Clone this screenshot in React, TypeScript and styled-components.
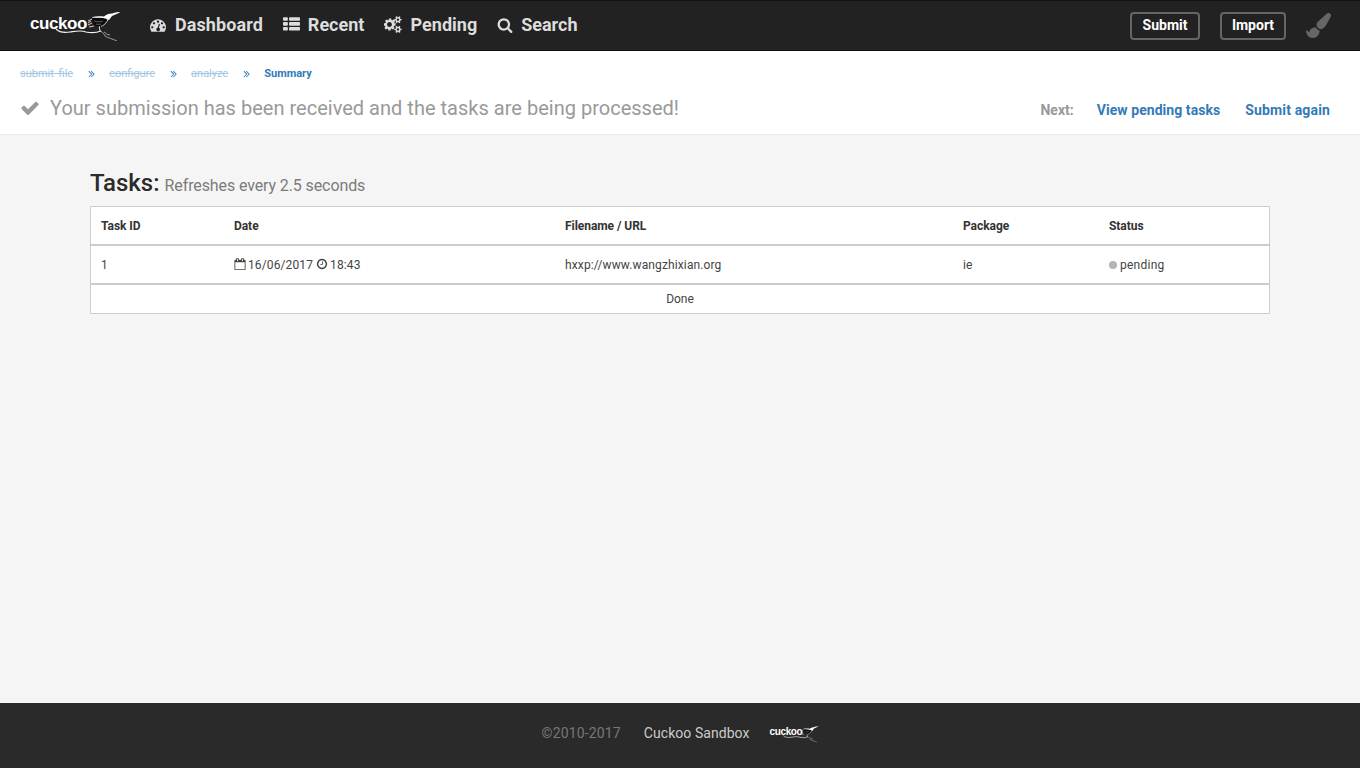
import React from "react";
import styled, { createGlobalStyle } from "styled-components";

const Global = createGlobalStyle`
  html, body { margin: 0; padding: 0; height: 100%; }
  body { font-family: Roboto, "Liberation Sans", sans-serif; background: #f5f5f5; color: #222; }
  #root { height: 100%; }
  * { box-sizing: border-box; }
`;

const Page = styled.div`
  height: 768px;
  display: flex;
  flex-direction: column;
  overflow: hidden;
`;

const TopBar = styled.header`
  height: 51px;
  flex: none;
  background: #222;
  border-top: 1px solid #111;
  border-bottom: 1px solid #111;
  display: flex;
  align-items: center;
  padding: 0 29px 0 30px;
`;

const LogoBox = styled.div<{ $small?: boolean }>`
  display: flex;
  align-items: flex-start;
  flex: none;
  width: ${(p) => (p.$small ? 50 : 91)}px;
  height: ${(p) => (p.$small ? 18 : 30)}px;
  margin-top: ${(p) => (p.$small ? 1 : 0)}px;
  position: relative;
`;

const LogoText = styled.span<{ $small?: boolean }>`
  font-family: "Liberation Sans", Arial, sans-serif;
  font-weight: 700;
  font-size: ${(p) => (p.$small ? 10 : 17)}px;
  letter-spacing: ${(p) => (p.$small ? -0.35 : -0.45)}px;
  line-height: 1;
  color: #fff;
  margin-top: ${(p) => (p.$small ? 2 : 4)}px;
`;

const LogoArt = styled.svg`
  position: absolute;
  left: 0;
  top: 0;
  width: 100%;
  height: 100%;
`;

const Nav = styled.nav`
  display: flex;
  align-items: center;
  margin: 0 0 2px 29px;
  gap: 20px;
`;

const NavItem = styled.a<{ $gap?: number; $ls?: number }>`
  display: flex;
  align-items: center;
  gap: ${(p) => p.$gap ?? 8}px;
  font-size: 18px;
  font-weight: 700;
  letter-spacing: ${(p) => p.$ls ?? 0}px;
  color: #ddd;
  svg { fill: #ddd; display: block; }
`;

const RightTools = styled.div`
  margin-left: auto;
  display: flex;
  align-items: center;
  svg { display: block; fill: #666; }
`;

const OutlineButton = styled.a<{ $w: number }>`
  width: ${(p) => p.$w}px;
  height: 28px;
  margin-right: 20px;
  padding-bottom: 2px;
  border: 2px solid #666;
  border-radius: 4px;
  display: flex;
  align-items: center;
  justify-content: center;
  font-size: 14px;
  font-weight: 700;
  color: #fff;
`;

const Sub = styled.section`
  height: 84px;
  flex: none;
  background: #fff;
  border-bottom: 1px solid #eaeaea;
  padding: 16px 30px 0 20px;
`;

const Crumbs = styled.div`
  display: flex;
  align-items: center;
  height: 13px;
  font-size: 11px;
  line-height: 13px;
`;

const Crumb = styled.a<{ $current?: boolean }>`
  color: ${(p) => (p.$current ? "#337ab7" : "#a3c6e4")};
  font-weight: ${(p) => (p.$current ? 700 : 400)};
  text-decoration: ${(p) => (p.$current ? "none" : "line-through")};
  word-spacing: 2px;
`;

const CrumbSep = styled.svg`
  width: 7px;
  height: 8px;
  margin: 0 14px 0 15px;
  fill: #337ab7;
`;

const SubRow = styled.div`
  display: flex;
  align-items: center;
  margin-top: 13px;
  height: 30px;
`;

const Message = styled.h2`
  margin: 0;
  display: flex;
  align-items: center;
  font-size: 20px;
  font-weight: 400;
  letter-spacing: 0.015px;
  color: #999;
  gap: 10px;
  svg { fill: #999; display: block; }
`;

const NextBox = styled.div`
  margin-left: auto;
  display: flex;
  align-items: center;
  font-size: 14px;
  font-weight: 700;
  padding-top: 3px;
`;

const NextLabel = styled.span`
  color: #999;
  margin-right: 23px;
`;

const NextLink = styled.a<{ $ml?: number; $ls?: number }>`
  color: #337ab7;
  margin-left: ${(p) => p.$ml ?? 0}px;
  letter-spacing: ${(p) => p.$ls ?? 0}px;
`;

const Main = styled.main`
  flex: 1;
  padding: 32px 90px 0;
`;

const Heading = styled.h3`
  margin: 0;
  height: 39px;
  display: flex;
  align-items: baseline;
  font-size: 24px;
  font-weight: 500;
  line-height: 32px;
  color: #2b2b2b;
  gap: 5px;
`;

const HeadingNote = styled.small`
  font-size: 16px;
  font-weight: 400;
  letter-spacing: -0.11px;
  color: #7b7b7b;
`;

const Table = styled.table`
  width: 1180px;
  border-collapse: separate;
  border-spacing: 0;
  table-layout: fixed;
  background: #fff;
  border: 1px solid #ccc;
  font-size: 12px;
  color: #444;
`;

const Th = styled.th`
  height: 39px;
  padding: 0 10px;
  text-align: left;
  font-weight: 700;
  letter-spacing: -0.05px;
  color: #333;
  border-bottom: 2px solid #ccc;
`;

const Td = styled.td`
  height: 39px;
  padding: 0 10px;
  letter-spacing: 0.12px;
  border-bottom: 2px solid #ccc;
`;

const DoneCell = styled.td`
  height: 28px;
  padding: 0 0 1px;
  text-align: center;
`;

const InlineIcon = styled.span<{ $left?: number; $right?: number }>`
  display: inline-block;
  margin: 0 ${(p) => p.$right ?? 2}px 0 ${(p) => p.$left ?? 0}px;
  vertical-align: -1px;
  svg { fill: #444; display: block; }
`;

const StatusCell = styled.span`
  display: inline-flex;
  align-items: center;
  gap: 3px;
  letter-spacing: 0.25px;
`;

const Dot = styled.i`
  width: 8px;
  height: 8px;
  border-radius: 50%;
  background: #b4b4b4;
`;

const Footer = styled.footer`
  height: 65px;
  flex: none;
  background: #2a2a2a;
  display: flex;
  align-items: center;
  justify-content: center;
  font-size: 14px;
  padding: 0 0 5px 1px;
`;

const Copy = styled.span`
  color: #777;
  margin-right: 23px;
  letter-spacing: 0.15px;
`;

const FootLink = styled.a`
  color: #ccc;
  margin-right: 20px;
  letter-spacing: 0.05px;
`;

/* FontAwesome 4 glyphs, 1792 unit grid */
const Fa = ({ d, size, w = 1792 }: { d: string; size: number; w?: number }) => (
  <svg width={(size * w) / 1792} height={size} viewBox={`0 0 ${w} 1792`} aria-hidden="true">
    <path d={d} />
  </svg>
);

const tachometer =
  "M384 1152q0-53-37.5-90.5T256 1024t-90.5 37.5T128 1152t37.5 90.5T256 1280t90.5-37.5T384 1152zm192-448q0-53-37.5-90.5T448 576t-90.5 37.5T320 704t37.5 90.5T448 832t90.5-37.5T576 704zm428 506l101-382q6-26-7.5-48.5T1059 750t-48 6.5-30 39.5l-101 382q-60 5-107 43.5T711 1320q-23 85 21 162t129 100 162-21 100-129q16-59-5-112.5T1004 1210zm660-58q0-53-37.5-90.5T1536 1024t-90.5 37.5T1408 1152t37.5 90.5 90.5 37.5 90.5-37.5 37.5-90.5zM1024 512q0-53-37.5-90.5T896 384t-90.5 37.5T768 512t37.5 90.5T896 640t90.5-37.5T1024 512zm448 192q0-53-37.5-90.5T1344 576t-90.5 37.5T1216 704t37.5 90.5T1344 832t90.5-37.5T1472 704zm320 448q0 261-141 483-19 29-54 29H195q-35 0-54-29Q0 1414 0 1152q0-182 71-348t191-286 286-191 348-71 348 71 286 191 191 286 71 348z";
const thList =
  "M512 1248v192q0 40-28 68t-68 28H96q-40 0-68-28t-28-68v-192q0-40 28-68t68-28h320q40 0 68 28t28 68zm0-512v192q0 40-28 68t-68 28H96q-40 0-68-28t-28-68V736q0-40 28-68t68-28h320q40 0 68 28t28 68zm1280 512v192q0 40-28 68t-68 28H736q-40 0-68-28t-28-68v-192q0-40 28-68t68-28h960q40 0 68 28t28 68zM512 224v192q0 40-28 68t-68 28H96q-40 0-68-28t-28-68V224q0-40 28-68t68-28h320q40 0 68 28t28 68zm1280 512v192q0 40-28 68t-68 28H736q-40 0-68-28t-28-68V736q0-40 28-68t68-28h960q40 0 68 28t28 68zm0-512v192q0 40-28 68t-68 28H736q-40 0-68-28t-28-68V224q0-40 28-68t68-28h960q40 0 68 28t28 68z";
const cogs =
  "M832 896q0-106-75-181t-181-75-181 75-75 181 75 181 181 75 181-75 75-181zm768 512q0-52-38-90t-90-38-90 38-38 90q0 53 37.500 90.500t90.500 37.500 90.500-37.500 37.500-90.500zm0-1024q0-52-38-90t-90-38-90 38-38 90q0 53 37.500 90.500T1472 512t90.500-37.500T1600 384zm-384 421v185q0 10-7 19.500t-16 10.500l-155 24q-11 35-32 76 34 48 90 115 7 11 7 20 0 12-7 19-23 30-82.500 89.500T935 1423q-11 0-21-7l-115-90q-37 19-77 31-11 108-23 155-7 24-30 24H483q-11 0-20-7.500t-10-17.500l-23-153q-34-10-75-31l-118 89q-7 7-20 7-11 0-21-8-144-133-144-160 0-9 7-19 10-14 41-53t47-61q-23-44-35-82l-152-24q-10-1-17-9.500T0 987V802q0-10 7-19.500T23 772l155-24q11-35 32-76-34-48-90-115-7-11-7-20 0-12 7-20 22-30 82-89t79-59q11 0 21 7l115 90q34-18 77-32 11-108 23-154 7-24 30-24h186q11 0 20 7.500t10 17.500l23 153q34 10 75 31l118-89q8-7 20-7 11 0 21 8 144 133 144 160 0 8-7 19-12 16-42 54t-45 60q23 48 34 82l152 23q10 2 17 10.500t7 19.500zm640 533v140q0 16-149 31-12 27-30 52 51 113 51 138 0 4-4 7-122 71-124 71-8 0-46-47t-52-68q-20 2-30 2t-30-2q-14 21-52 68t-46 47q-2 0-124-71-4-3-4-7 0-25 51-138-18-25-30-52-149-15-149-31v-140q0-16 149-31 13-29 30-52-51-113-51-138 0-4 4-7 4-2 35-20t59-34 30-16q8 0 46 46.500t52 67.500q20-2 30-2t30 2q51-71 92-112l6-2q4 0 124 70 4 3 4 7 0 25-51 138 17 23 30 52 149 15 149 31zm0-1024v140q0 16-149 31-12 27-30 52 51 113 51 138 0 4-4 7-122 71-124 71-8 0-46-47t-52-68q-20 2-30 2t-30-2q-14 21-52 68t-46 47q-2 0-124-71-4-3-4-7 0-25 51-138-18-25-30-52-149-15-149-31V314q0-16 149-31 13-29 30-52-51-113-51-138 0-4 4-7 4-2 35-20t59-34 30-16q8 0 46 46.500t52 67.500q20-2 30-2t30 2q51-71 92-112l6-2q4 0 124 70 4 3 4 7 0 25-51 138 17 23 30 52 149 15 149 31z";
const search =
  "M1216 832q0-185-131.500-316.500T768 384 451.500 515.500 320 832t131.500 316.500T768 1280t316.500-131.500T1216 832zm512 832q0 52-38 90t-90 38q-54 0-90-38l-343-342q-179 124-399 124-143 0-273.500-55.500t-225-150-150-225T64 832t55.500-273.500 150-225 225-150T768 128t273.500 55.500 225 150 150 225T1472 832q0 220-124 399l343 343q37 37 37 90z";
const check =
  "M1671 566q0 40-28 68l-724 724-136 136q-28 28-68 28t-68-28l-136-136-362-362q-28-28-28-68t28-68l136-136q28-28 68-28t68 28l294 295 656-657q28-28 68-28t68 28l136 136q28 28 28 68z";
const brush =
  "M1615 0q70 0 122.500 46.500t52.500 116.500q0 63-45 151-332 629-465 752-97 91-218 91-126 0-216.500-92.500t-90.500-219.500q0-128 92-212l639-580q59-54 130-54zm-909 1032q39 76 106.500 130t150.500 76l1 71q4 213-129.500 347t-348.500 134q-123 0-218-46.500t-152.500-127.500-86.500-183-29-220q7 5 41 30t62 44.500 59 36.500 46 17q41 0 55-37 25-66 57.500-112.500t69.500-76 88-47.500 103-25.500 125-10.500z";
const calendar =
  "M192 1664h1408V640H192v1024zM576 448V160q0-14-9-23t-23-9h-64q-14 0-23 9t-9 23v288q0 14 9 23t23 9h64q14 0 23-9t9-23zm768 0V160q0-14-9-23t-23-9h-64q-14 0-23 9t-9 23v288q0 14 9 23t23 9h64q14 0 23-9t9-23zm384-64v1280q0 52-38 90t-90 38H192q-52 0-90-38t-38-90V384q0-52 38-90t90-38h128v-96q0-66 47-113T480 0h64q66 0 113 47t47 113v96h384v-96q0-66 47-113t113-47h64q66 0 113 47t47 113v96h128q52 0 90 38t38 90z";
const clock =
  "M1024 544v448q0 14-9 23t-23 9H672q-14 0-23-9t-9-23v-64q0-14 9-23t23-9h224V544q0-14 9-23t23-9h64q14 0 23 9t9 23zm416 352q0-148-73-273T1169 425t-273-73-273 73-198 198-73 273 73 273 198 198 273 73 273-73 198-198 73-273zm224 0q0 209-103 385.500T1281 1561t-385 103-385-103-280-279.500T128 896t103-385.500T511 231t385-103 385 103 280 279.500T1664 896z";
const dbl =
  "M1075 1024q0 13-10 23l-466 466q-10 10-23 10t-23-10l-50-50q-10-10-10-23t10-23l393-393-393-393q-10-10-10-23t10-23l50-50q10-10 23-10t23 10l466 466q10 10 10 23zm384 0q0 13-10 23l-466 466q-10 10-23 10t-23-10l-50-50q-10-10-10-23t10-23l393-393-393-393q-10-10-10-23t10-23l50-50q10-10 23-10t23 10l466 466q10 10 10 23z";

const Logo = ({ small }: { small?: boolean }) => (
  <LogoBox $small={small}>
    <LogoText $small={small}>cuckoo</LogoText>
    <LogoArt viewBox="0 0 91 30" aria-hidden="true">
      {/* branch sweeping under the word */}
      <path d="M26 18c3 3 8 4 14 3 7-1 11-2 16 0 5 1 10 1 15-1" fill="none" stroke="#f2f2f2" strokeWidth="1.1" />
      <path d="M70 20c3 1 4 3 5 5 3 2 8 3 12 5M74 21c2 1 3 3 6 3" fill="none" stroke="#bbb" strokeWidth="0.8" />
      <path d="M69 14l1 6" stroke="#ddd" strokeWidth="1" fill="none" />
      {/* head and beak */}
      <path d="M62 6c4-1 8-1 12-.5 2-2 5-3 8-3 2-1 5-1 7-1.500l1 .5-8 3.500-3 4-5-1c-4-1-8-1.500-12-1.500z" fill="#fff" />
      {/* dark striped body */}
      <path d="M62 7.500c5-1 10-1 15 .5-2 4-5 7-9 7.500-3 0-5-3-6-8z" fill="#0a0a0a" />
      <path d="M64 10c3 1 6 1 9 0M66 13c2 .5 3 .5 5 0" stroke="#999" strokeWidth="0.6" fill="none" />
      <path d="M71 15.500c3-1 6-4 7-7" stroke="#eee" strokeWidth="0.7" fill="none" />
      {/* tail feathers */}
      <path d="M62 8l-4 2M61 10l-3 2M62 12l-4 2M64 15l-5 1" stroke="#e4e4e4" strokeWidth="0.9" fill="none" />
    </LogoArt>
  </LogoBox>
);

export default function App() {
  return (
    <Page>
      <Global />
      <TopBar>
        <Logo />
        <Nav>
          <NavItem $gap={9} $ls={0.08}><Fa d={tachometer} size={16} />Dashboard</NavItem>
          <NavItem><Fa d={thList} size={17} />Recent</NavItem>
          <NavItem><Fa d={cogs} size={17} w={1920} />Pending</NavItem>
          <NavItem><Fa d={search} size={16} />Search</NavItem>
        </Nav>
        <RightTools>
          <OutlineButton $w={70}>Submit</OutlineButton>
          <OutlineButton $w={66}>Import</OutlineButton>
          <Fa d={brush} size={25} />
        </RightTools>
      </TopBar>
      <Sub>
        <Crumbs>
          <Crumb>submit file</Crumb>
          <CrumbSep viewBox="400 400 1100 1200"><path d={dbl} /></CrumbSep>
          <Crumb>configure</Crumb>
          <CrumbSep viewBox="400 400 1100 1200"><path d={dbl} /></CrumbSep>
          <Crumb>analyze</Crumb>
          <CrumbSep viewBox="400 400 1100 1200"><path d={dbl} /></CrumbSep>
          <Crumb $current>Summary</Crumb>
        </Crumbs>
        <SubRow>
          <Message><Fa d={check} size={20} />Your submission has been received and the tasks are being processed!</Message>
          <NextBox>
            <NextLabel>Next:</NextLabel>
            <NextLink $ls={0.06}>View pending tasks</NextLink>
            <NextLink $ml={25} $ls={0.15}>Submit again</NextLink>
          </NextBox>
        </SubRow>
      </Sub>
      <Main>
        <Heading>Tasks: <HeadingNote>Refreshes every 2.5 seconds</HeadingNote></Heading>
        <Table>
          <colgroup>
            <col width="133" /><col width="331" /><col width="398" /><col width="146" /><col />
          </colgroup>
          <thead>
            <tr><Th>Task ID</Th><Th>Date</Th><Th>Filename / URL</Th><Th>Package</Th><Th>Status</Th></tr>
          </thead>
          <tbody>
            <tr>
              <Td>1</Td>
              <Td>
                <InlineIcon><Fa d={calendar} size={12} /></InlineIcon>16/06/2017
                <InlineIcon $left={3}><Fa d={clock} size={12} /></InlineIcon>18:43
              </Td>
              <Td>hxxp://www.wangzhixian.org</Td>
              <Td>ie</Td>
              <Td><StatusCell><Dot />pending</StatusCell></Td>
            </tr>
            <tr><DoneCell colSpan={5}>Done</DoneCell></tr>
          </tbody>
        </Table>
      </Main>
      <Footer>
        <Copy>©2010-2017</Copy>
        <FootLink>Cuckoo Sandbox</FootLink>
        <Logo small />
      </Footer>
    </Page>
  );
}
